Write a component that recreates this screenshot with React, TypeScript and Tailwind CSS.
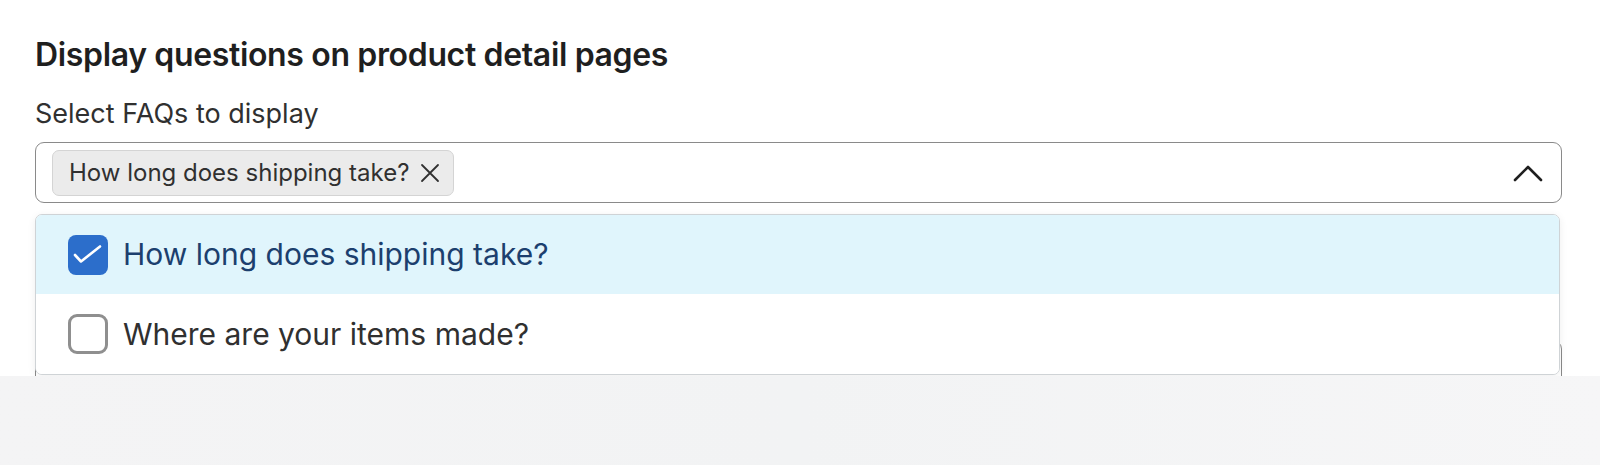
const options = [
    { id: 1, label: "How long does shipping take?", selected: true },
    { id: 2, label: "Where are your items made?", selected: false },
]

export default function App() {
    return (
        <div className="h-[465px] w-[1600px] flex flex-col bg-[#f3f4f5] font-['Inter','Noto_Sans',sans-serif] text-[#303030]">
            {/* settings card */}
            <div className="h-[376px] bg-white pl-[35px] pr-[38px] pt-[35px] overflow-hidden">
                <h2 className="text-[32px] leading-[40px] font-semibold text-[#1f1f1f] tracking-[-0.35px]">
                    Display questions on product detail pages
                </h2>
                <label className="block mt-[21px] text-[27px] leading-[36px] text-[#303030]">Select FAQs to display</label>

                <div className="relative mt-[10px]">
                    {/* select control */}
                    <div className="h-[61px] rounded-[9px] border border-[#8a8a8a] flex items-center pl-[16px] pr-[18px]">
                        <div className="h-[46px] rounded-[7px] border border-[#d4d4d4] bg-[#ebebeb] flex items-center pl-[16px] pr-[13px] gap-[11px]">
                            <span className="text-[24px] text-[#303030]">How long does shipping take?</span>
                            <svg width="20" height="20" viewBox="0 0 20 20" fill="none">
                                <path d="M2 2l16 16M18 2 2 18" stroke="#303030" strokeWidth="1.8" strokeLinecap="round" />
                            </svg>
                        </div>
                        <div className="flex-1" />
                        <svg width="30" height="18" viewBox="0 0 30 18" fill="none">
                            <path d="M2 16 15 3l13 13" stroke="#1f1f1f" strokeWidth="2.6" strokeLinecap="round" strokeLinejoin="round" />
                        </svg>
                    </div>

                    {/* field sitting under the open menu */}
                    <div className="mt-[137px] h-[80px] rounded-[9px] border border-[#8a8a8a]" />

                    {/* dropdown menu */}
                    <div className="absolute left-0 right-[2px] top-[72px] bg-white border border-[#cfd3d6] rounded-[7px] overflow-hidden shadow-[0_2px_8px_rgba(0,0,0,0.07)]">
                        {options.map((opt) => (
                            <div
                                key={opt.id}
                                className={
                                    opt.selected
                                        ? "h-[79px] bg-[#e0f5fc] flex items-center pl-[32px] gap-[15px]"
                                        : "h-[80px] bg-white flex items-center pl-[32px] gap-[15px]"
                                }
                            >
                                {opt.selected ? (
                                    <span className="w-[40px] h-[40px] rounded-[8px] bg-[#2c6ecb] flex items-center justify-center">
                                        <svg width="40" height="40" viewBox="0 0 40 40" fill="none">
                                            <path d="M7 20l6 6.5L32 11.5" stroke="white" strokeWidth="2.6" strokeLinecap="round" strokeLinejoin="round" />
                                        </svg>
                                    </span>
                                ) : (
                                    <span className="w-[40px] h-[40px] rounded-[9px] border-[3.5px] border-[#8f8f8f] bg-white" />
                                )}
                                <span
                                    className={
                                        opt.selected
                                            ? "text-[30px] text-[#1c3f6e]"
                                            : "text-[30px] text-[#303030]"
                                    }
                                >
                                    {opt.label}
                                </span>
                            </div>
                        ))}
                    </div>
                </div>
            </div>
            <div className="flex-1 bg-gradient-to-r from-[#f4f4f5] via-[#f2f3f4] to-[#f6f6f7]" />
        </div>
    )
}
